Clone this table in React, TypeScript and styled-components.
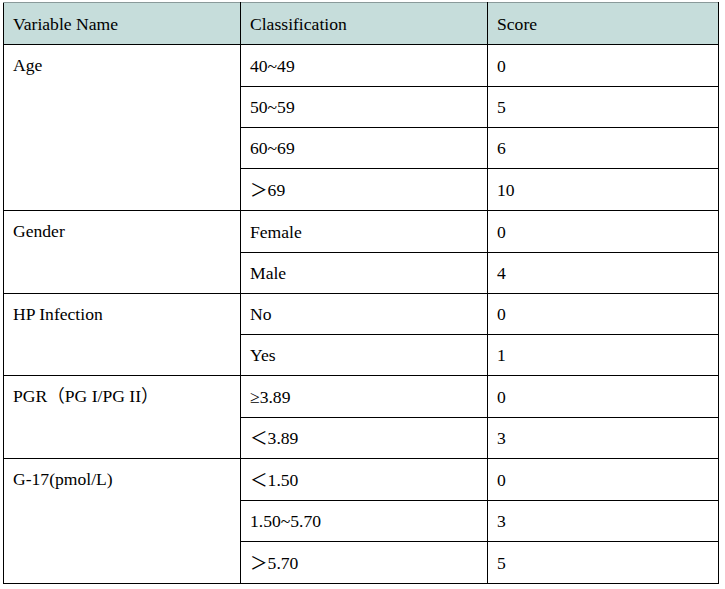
import React from "react";
import styled, { createGlobalStyle } from "styled-components";

const Global = createGlobalStyle`
  html, body { margin: 0; padding: 0; background: #fff; }
  body { font-family: "Liberation Serif", "Noto Sans CJK SC", serif; color: #000; }
`;

const Wrap = styled.div`
  padding: 2px 0 0 3px;
`;

const Table = styled.table`
  border-collapse: collapse;
  table-layout: fixed;
  width: 715px;
  font-size: 17.6px;
  line-height: 20px;
  border-top: 1px solid #8a9a9a;
`;

const HeadRow = styled.tr`
  background: #c6dddb;
  height: 42px;
`;

const Row = styled.tr<{ $h: number }>`
  height: ${(p) => p.$h}px;
`;

const Cell = styled.td<{ $merged?: boolean }>`
  border: 1px solid #000;
  padding: 0 8px 0 9px;
  vertical-align: ${(p) => (p.$merged ? "top" : "middle")};
  padding-top: ${(p) => (p.$merged ? "10px" : "0")};
  white-space: nowrap;
`;

const HeadCell = styled.th`
  border: 1px solid #000;
  border-top-color: #8a9a9a;
  padding: 0 8px 0 9px;
  text-align: left;
  font-weight: normal;
  vertical-align: middle;
`;

type Group = { name: string; items: [string, string][] };

const groups: Group[] = [
  { name: "Age", items: [["40~49", "0"], ["50~59", "5"], ["60~69", "6"], ["＞69", "10"]] },
  { name: "Gender", items: [["Female", "0"], ["Male", "4"]] },
  { name: "HP Infection", items: [["No", "0"], ["Yes", "1"]] },
  { name: "PGR（PG I/PG II）", items: [["≥3.89", "0"], ["＜3.89", "3"]] },
  { name: "G-17(pmol/L)", items: [["＜1.50", "0"], ["1.50~5.70", "3"], ["＞5.70", "5"]] },
];

const heights = [42, 41, 41, 42, 42, 41, 41, 41, 42, 41, 42, 41, 42];

export default function App() {
  let idx = 0;
  return (
    <>
      <Global />
      <Wrap>
        <Table>
          <colgroup>
            <col style={{ width: 237 }} />
            <col style={{ width: 247 }} />
            <col style={{ width: 231 }} />
          </colgroup>
          <thead>
            <HeadRow>
              <HeadCell>Variable Name</HeadCell>
              <HeadCell>Classification</HeadCell>
              <HeadCell>Score</HeadCell>
            </HeadRow>
          </thead>
          <tbody>
            {groups.map((g) =>
              g.items.map(([c, s], i) => {
                const h = heights[idx++];
                return (
                  <Row key={g.name + i} $h={h}>
                    {i === 0 && (
                      <Cell $merged rowSpan={g.items.length}>
                        {g.name}
                      </Cell>
                    )}
                    <Cell>{c}</Cell>
                    <Cell>{s}</Cell>
                  </Row>
                );
              })
            )}
          </tbody>
        </Table>
      </Wrap>
    </>
  );
}
